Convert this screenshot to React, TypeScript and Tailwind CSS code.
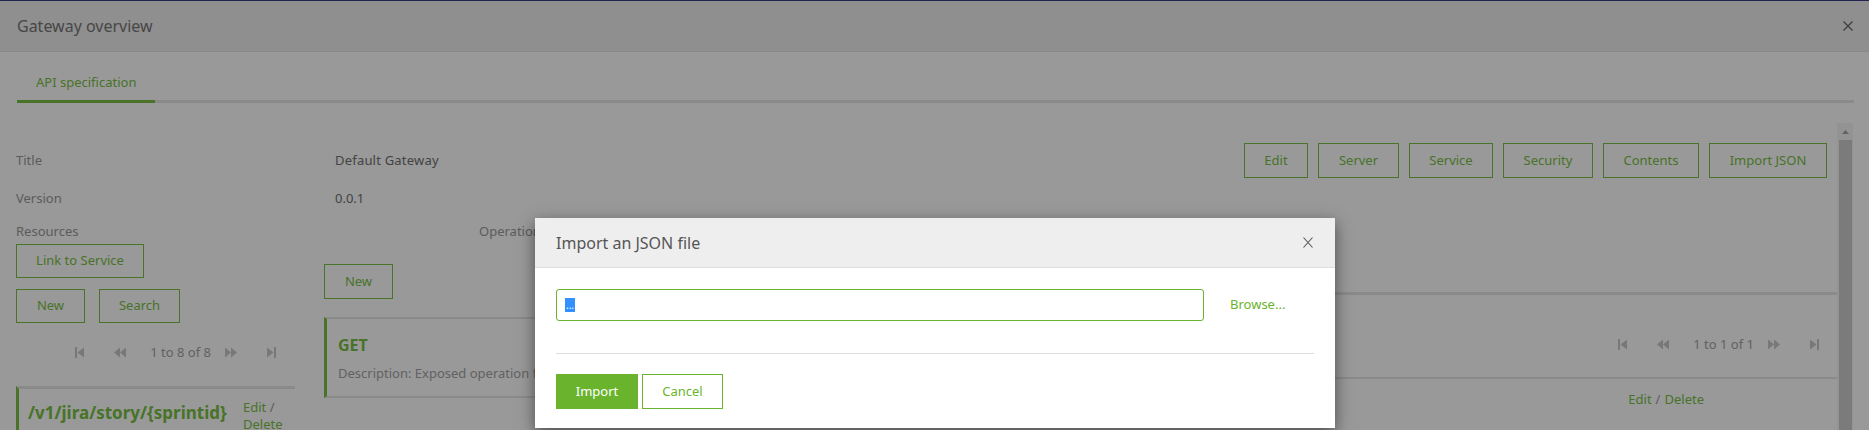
import React from "react";

function FirstIcon() {
  return (
    <svg width="9" height="11" viewBox="0 0 9 11" fill="currentColor">
      <rect x="0" y="0" width="2" height="11" />
      <polygon points="9,0.5 2.5,5.5 9,10.5" />
    </svg>
  );
}
function PrevIcon() {
  return (
    <svg width="12" height="11" viewBox="0 0 12 11" fill="currentColor">
      <polygon points="6,0.5 0,5.5 6,10.5" />
      <polygon points="12,0.5 6,5.5 12,10.5" />
    </svg>
  );
}
function NextIcon() {
  return (
    <svg width="12" height="11" viewBox="0 0 12 11" fill="currentColor">
      <polygon points="0,0.5 6,5.5 0,10.5" />
      <polygon points="6,0.5 12,5.5 6,10.5" />
    </svg>
  );
}
function LastIcon() {
  return (
    <svg width="9" height="11" viewBox="0 0 9 11" fill="currentColor">
      <polygon points="0,0.5 6.5,5.5 0,10.5" />
      <rect x="7" y="0" width="2" height="11" />
    </svg>
  );
}

function Pager({ text }: { text: string }) {
  return (
    <div className="flex items-center justify-end h-[20px] text-[#c8c8c8]">
      <FirstIcon />
      <span className="ml-[30px]">
        <PrevIcon />
      </span>
      <span className="ml-[24px] text-[13px] leading-[20px] text-[#a3a3a3]">{text}</span>
      <span className="ml-[14px]">
        <NextIcon />
      </span>
      <span className="ml-[30px]">
        <LastIcon />
      </span>
    </div>
  );
}

function OutlineBtn({ label, w }: { label: string; w: string }) {
  return (
    <button
      className={`${w} h-full border border-[#78c044] text-[#78c044] text-[13px] flex items-center justify-center bg-transparent`}
    >
      {label}
    </button>
  );
}

export default function App() {
  return (
    <div className="relative w-full h-[430px] overflow-hidden bg-white font-['Noto_Sans',sans-serif]">
      {/* page */}
      <div className="h-[1px] bg-[#3b3b8a]" />
      <div className="h-[51px] bg-[#eeeeee] border-b border-[#e4e4e4] flex items-center justify-between pl-[17px] pr-[16px]">
        <span className="text-[16px] text-[#777777]">Gateway overview</span>
        <svg width="10" height="10" viewBox="0 0 10 10" className="text-[#666666]">
          <path d="M0.5 0.5 L9.5 9.5 M9.5 0.5 L0.5 9.5" stroke="currentColor" strokeWidth="1.3" />
        </svg>
      </div>

      {/* tabs */}
      <div className="ml-[17px] mr-[15px] border-b-[3px] border-[#e6e6e6] flex">
        <div className="-mb-[3px] border-b-[3px] border-[#78c044] px-[19px] pt-[21px] pb-[9px] text-[13px] leading-[18px] text-[#78c044]">
          API specification
        </div>
      </div>

      {/* scroll area */}
      <div className="mt-[20px] h-[307px] flex overflow-hidden">
        <div className="flex-1 pl-[16px] text-[13px]">
          {/* Title row */}
          <div className="mt-[20px] h-[35px] flex items-center">
            <span className="w-[319px] text-[#999999]">Title</span>
            <span className="text-[#707070] tracking-[0.2px]">Default Gateway</span>
            <div className="ml-auto mr-[10px] h-full flex gap-[10px]">
              <OutlineBtn label="Edit" w="w-[64px]" />
              <OutlineBtn label="Server" w="w-[81px]" />
              <OutlineBtn label="Service" w="w-[84px]" />
              <OutlineBtn label="Security" w="w-[90px]" />
              <OutlineBtn label="Contents" w="w-[96px]" />
              <OutlineBtn label="Import JSON" w="w-[118px]" />
            </div>
          </div>
          {/* Version row */}
          <div className="mt-[11px] h-[20px] flex items-center">
            <span className="w-[319px] text-[#999999]">Version</span>
            <span className="text-[#707070]">0.0.1</span>
          </div>

          <div className="mt-[12px] flex">
            {/* left column */}
            <div className="w-[279px] flex flex-col">
              <div className="h-[20px] leading-[20px] text-[#999999]">Resources</div>
              <div className="mt-[3px] h-[34px] flex">
                <OutlineBtn label="Link to Service" w="w-[128px]" />
              </div>
              <div className="mt-[11px] h-[34px] flex gap-[14px]">
                <OutlineBtn label="New" w="w-[69px]" />
                <OutlineBtn label="Search" w="w-[81px]" />
              </div>
              <div className="mt-[19px] pr-[19px]">
                <Pager text="1 to 8 of 8" />
              </div>
              <div className="mt-[24px] border-t-[3px] border-t-[#e6e6e6] border-l-[3px] border-l-[#78c044] h-[60px] flex items-start pl-[9px] pt-[10px]">
                <div className="flex-1 mt-[2px] text-[17px] leading-[24px] font-bold text-[#78c044]">
                  /v1/jira/story/&#123;sprintid&#125;
                </div>
                <div className="w-[52px] text-[13px] leading-[17px] text-[#78c044]">
                  Edit <span className="text-[#999999]">/</span>
                  <br />
                  Delete
                </div>
              </div>
            </div>

            {/* middle / right */}
            <div className="ml-[29px] flex-1 flex flex-col">
              <div className="h-[20px] leading-[20px] pl-[155px] text-[#999999]">Operations</div>
              <div className="flex">
                <div className="w-[560px] flex flex-col">
                  <div className="mt-[23px] h-[35px] flex">
                    <OutlineBtn label="New" w="w-[69px]" />
                  </div>
                  <div className="mt-[18px] border-t-2 border-b-2 border-[#e6e6e6] border-l-[3px] border-l-[#78c044] pl-[11px] pt-[15px] pb-[14px]">
                    <div className="text-[16px] leading-[22px] font-bold text-[#78c044]">GET</div>
                    <div className="mt-[8px] text-[13px] leading-[18px] text-[#a3a3a3]">
                      Description: Exposed operation for Jira story by sprint
                    </div>
                  </div>
                </div>
                <div className="ml-[20px] flex-1 flex flex-col">
                  <div className="mt-[51px] border-t-[3px] border-[#e6e6e6]" />
                  <div className="mt-[39px] pr-[18px]">
                    <Pager text="1 to 1 of 1" />
                  </div>
                  <div className="mt-[23px] h-[2px] bg-[#e6e6e6]" />
                  <div className="mt-[11px] flex justify-end pr-[133px] text-[13px] leading-[18px] text-[#78c044]">
                    Edit <span className="mx-[4px] text-[#999999]">/</span> Delete
                  </div>
                </div>
              </div>
            </div>
          </div>
        </div>

        {/* scrollbar */}
        <div className="w-[16px] bg-[#f6f6f6] flex flex-col items-center">
          <div className="h-[17px] w-full flex items-center justify-center">
            <svg width="7" height="4" viewBox="0 0 7 4">
              <polygon points="0,4 3.5,0 7,4" fill="#a3a3a3" />
            </svg>
          </div>
          <div className="ml-[2px] mr-[1px] self-stretch flex-1 bg-[#cdcdcd]" />
        </div>
        <div className="w-[16px]" />
      </div>

      {/* backdrop */}
      <div className="absolute inset-0 bg-black/40" />

      {/* modal */}
      <div className="absolute left-[535px] top-[218px] w-[800px] h-[210px] bg-white shadow-[0_5px_15px_rgba(0,0,0,0.5)] flex flex-col">
        <div className="h-[50px] bg-[#eeeeee] border-b border-[#dddddd] flex items-center justify-between pl-[21px] pr-[22px]">
          <span className="text-[16px] text-[#555555]">Import an JSON file</span>
          <svg width="10" height="11" viewBox="0 0 10 11" className="text-[#555555]">
            <path d="M0.5 0.5 L9.5 10.5 M9.5 0.5 L0.5 10.5" stroke="currentColor" strokeWidth="1.1" />
          </svg>
        </div>
        <div className="px-[21px] pt-[21px] flex flex-col">
          <div className="flex items-center h-[32px]">
            <div className="w-[648px] h-full border border-[#6ab42d] rounded-[3px] flex items-center pl-[8px]">
              <span className="bg-[#3390ff] text-white text-[10px] leading-[14px] h-[14px] w-[10px] flex items-end justify-center overflow-hidden">
                ...
              </span>
            </div>
            <span className="ml-[26px] text-[13px] text-[#6ab42d]">Browse...</span>
          </div>
          <div className="mt-[32px] h-[1px] bg-[#dddddd]" />
          <div className="mt-[20px] h-[35px] flex gap-[4px]">
            <button className="w-[82px] h-full bg-[#6ab42d] text-white text-[13px]">Import</button>
            <button className="w-[81px] h-full border border-[#6ab42d] bg-white text-[#6ab42d] text-[13px]">
              Cancel
            </button>
          </div>
        </div>
      </div>
    </div>
  );
}
